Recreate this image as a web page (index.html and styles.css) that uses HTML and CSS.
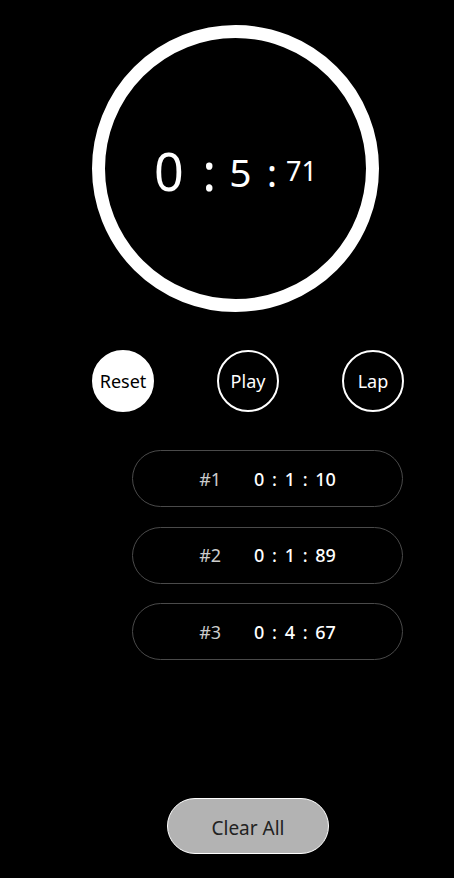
FILE: index.html
```html
<!DOCTYPE html>
<html lang="ko">
<head>
<meta charset="utf-8">
<link rel="stylesheet" href="styles.css">
</head>
<body>
<main class="app">
  <div class="dial">
    <div class="time">
      <span class="t-min">0 :</span>
      <span class="t-sec">5 :</span>
      <span class="t-ms">71</span>
    </div>
  </div>
  <div class="controls">
    <button class="btn btn-reset">Reset</button>
    <button class="btn">Play</button>
    <button class="btn">Lap</button>
  </div>
  <ul class="laps">
    <li class="lap"><span class="lap-no">#1</span><span class="lap-time">0 : 1 : 10</span></li>
    <li class="lap"><span class="lap-no">#2</span><span class="lap-time">0 : 1 : 89</span></li>
    <li class="lap"><span class="lap-no">#3</span><span class="lap-time">0 : 4 : 67</span></li>
  </ul>
  <button class="clear">Clear All</button>
</main>
</body>
</html>
```
FILE: styles.css
```css
* { box-sizing: border-box; }
html, body {
  margin: 0;
  padding: 0;
  background: #000;
  color: #fff;
  font-family: "Noto Sans", "Noto Sans CJK KR", sans-serif;
}
.app {
  display: flex;
  flex-direction: column;
  align-items: flex-start;
  padding-top: 25px;
  height: 878px;
}
.dial {
  margin-left: 92px;
  width: 287px;
  height: 287px;
  border: 13px solid #fff;
  border-radius: 50%;
  display: flex;
  align-items: center;
  justify-content: center;
}
.time {
  display: flex;
  align-items: center;
  margin-top: 5px;
}
.t-min { font-size: 52px; line-height: 1; word-spacing: 5px; margin-right: 13px; }
.t-sec { font-size: 39px; line-height: 1; word-spacing: 5px; margin-right: 9px; }
.t-ms { font-size: 27px; line-height: 1; margin-top: -1px; }
.controls {
  margin-top: 38px;
  margin-left: 92px;
  display: flex;
  gap: 63px;
}
.btn {
  width: 62px;
  height: 62px;
  border-radius: 50%;
  border: 2px solid #fff;
  background: #000;
  color: #fff;
  font-family: inherit;
  font-size: 18px;
  padding: 0;
  line-height: 1;
}
.btn-reset {
  background: #fff;
  color: #000;
}
.laps {
  list-style: none;
  margin: 38px 0 0 132px;
  padding: 0;
  display: flex;
  flex-direction: column;
  gap: 19.5px;
}
.lap {
  width: 271px;
  height: 57px;
  border: 1px solid #4a4a4a;
  border-radius: 29px;
  display: flex;
  align-items: center;
  justify-content: center;
  gap: 33px;
  font-size: 18px;
}
.lap-no { color: #ccc; }
.lap-time { color: #fff; font-weight: 500; word-spacing: 3px; }
.clear {
  margin-top: auto;
  margin-bottom: 24px;
  margin-left: 167px;
  width: 162px;
  height: 56px;
  border-radius: 28px;
  border: 1px solid #fff;
  background: #b3b3b3;
  color: #222;
  font-family: inherit;
  font-size: 19px;
  padding: 3px 0 0;
}
```
